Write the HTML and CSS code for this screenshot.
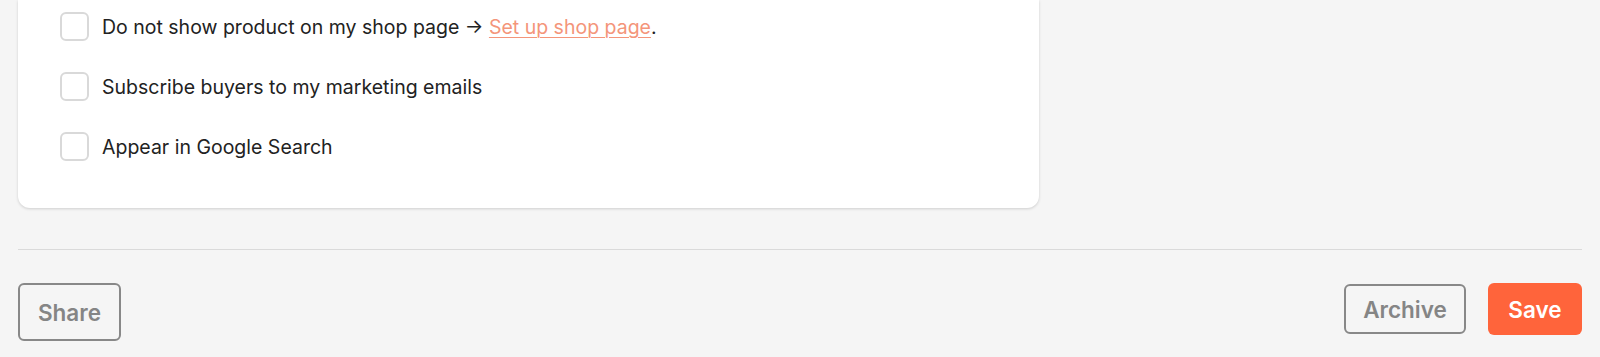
FILE: index.html
```html
<!DOCTYPE html>
<html lang="en">
<head>
<meta charset="utf-8">
<title>Product settings</title>
<link rel="stylesheet" href="styles.css">
</head>
<body>
<div class="page">
  <section class="card">
    <label class="option">
      <span class="box"></span>
      <span class="label-text">Do not show product on my shop page → <a class="link" href="#">Set up shop page</a>.</span>
    </label>
    <label class="option">
      <span class="box"></span>
      <span class="label-text">Subscribe buyers to my marketing emails</span>
    </label>
    <label class="option">
      <span class="box"></span>
      <span class="label-text">Appear in Google Search</span>
    </label>
  </section>
  <hr class="divider">
  <footer class="actions">
    <button class="btn btn-outline btn-share">Share</button>
    <div class="right-actions">
      <button class="btn btn-outline btn-archive">Archive</button>
      <button class="btn btn-primary">Save</button>
    </div>
  </footer>
</div>
</body>
</html>
```

FILE: styles.css
```css
html, body {
  margin: 0;
  padding: 0;
  background: #f5f5f5;
}
body {
  font-family: Inter, "Noto Sans", "Liberation Sans", sans-serif;
  color: #222222;
}
.page {
  padding: 0 18px;
}
.card {
  width: 1021px;
  background: #ffffff;
  border-radius: 0 0 12px 12px;
  box-shadow: 0 1px 3px rgba(0, 0, 0, 0.16);
  padding: 12px 0 47px 42px;
  box-sizing: border-box;
  display: flex;
  flex-direction: column;
  gap: 31px;
}
.option {
  display: flex;
  align-items: center;
  gap: 13px;
  height: 29px;
  font-size: 19.5px;
  color: #222222;
}
.box {
  width: 25px;
  height: 25px;
  border: 2px solid #d9d9d9;
  border-radius: 6px;
  background: #ffffff;
  flex: none;
}
.link {
  color: #f4957a;
  text-decoration: underline;
  text-underline-offset: 3px;
  text-decoration-thickness: 1px;
}
.divider {
  border: none;
  border-top: 1px solid #dadada;
  margin: 41px 0 33px;
}
.actions {
  display: flex;
  justify-content: space-between;
  align-items: flex-start;
}
.right-actions {
  display: flex;
  gap: 22px;
  align-items: flex-start;
}
.btn {
  font-family: Inter, "Noto Sans", "Liberation Sans", sans-serif;
  font-weight: 600;
  font-size: 22.5px;
  border-radius: 6px;
  box-sizing: border-box;
  cursor: pointer;
  padding: 0;
}
.btn-outline {
  background: transparent;
  border: 2px solid #888888;
  color: #858585;
}
.btn-share {
  width: 103px;
  height: 58px;
}
.btn-archive {
  width: 122px;
  height: 50px;
  margin-top: 1px;
}
.btn-primary {
  width: 94px;
  height: 52px;
  background: #ff643b;
  border: none;
  color: #ffffff;
}
```
